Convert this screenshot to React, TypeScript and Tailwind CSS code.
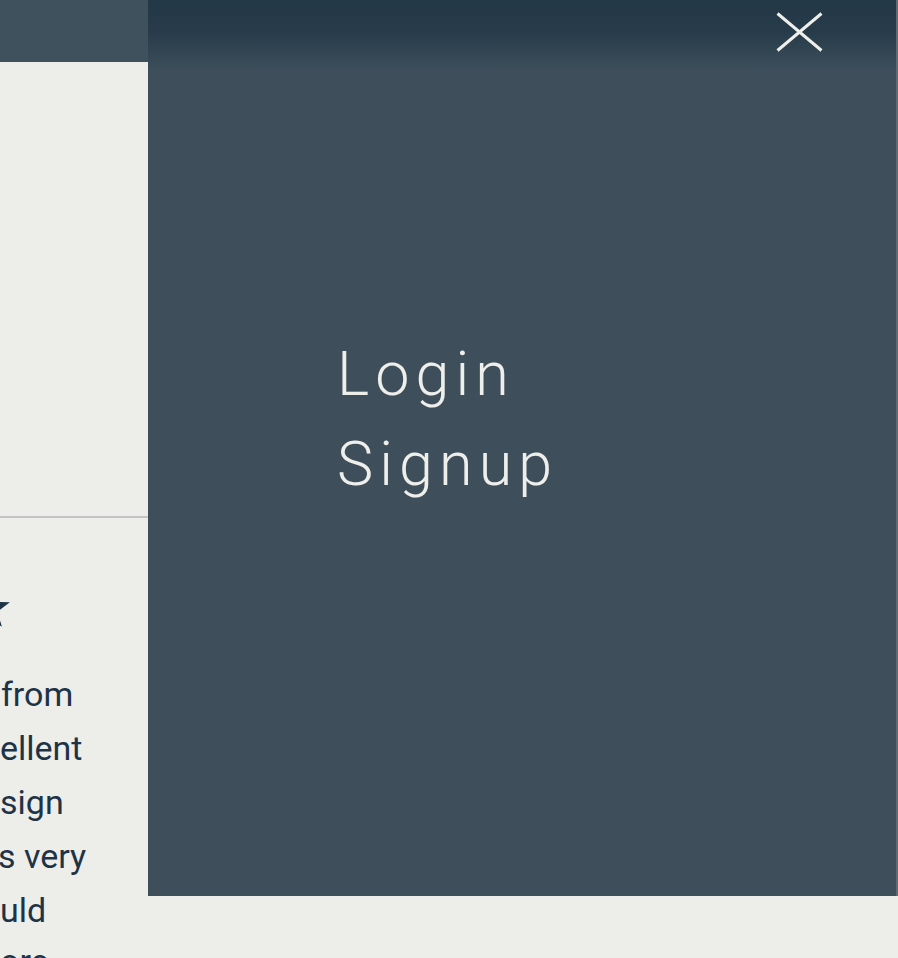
export default function App() {
    const lines = [
        { text: "from", pad: "pl-[1px]" },
        { text: "ellent", pad: "pl-0" },
        { text: "sign", pad: "pl-0" },
        { text: "s very", pad: "-ml-[2px]" },
        { text: "uld", pad: "pl-0" },
        { text: "ore", pad: "-mt-[3px]" },
    ];

    return (
        <div className="relative w-[898px] h-[958px] overflow-hidden bg-[#ededea] font-['Roboto','Liberation_Sans',sans-serif]">
            {/* page underneath */}
            <header className="h-[62px] bg-[#3f515d]" />
            <div className="h-[454px]" />
            <div className="h-[2px] w-full bg-[#c2c5c3]" />
            <div className="pt-[69px] -ml-[33px]">
                <svg width="44" height="44" viewBox="-22 -22 44 44">
                    <polygon
                        fill="#1e3345"
                        points="0,-22 5.2,-7.1 20.9,-6.8 8.4,2.7 12.9,17.8 0,8.8 -12.9,17.8 -8.4,2.7 -20.9,-6.8 -5.2,-7.1"
                    />
                </svg>
            </div>
            <div className="mt-[36px] text-[34px] leading-[54px] text-[#1e3345] whitespace-nowrap">
                {lines.map((l) => (
                    <div key={l.text} className={l.pad}>
                        {l.text}
                    </div>
                ))}
            </div>

            {/* menu overlay */}
            <div className="absolute left-[148px] top-0 w-[750px] h-[896px] flex">
                <div className="relative flex-1 bg-[linear-gradient(to_bottom,#233846_0px,#273b4a_32px,#3e4f5b_72px,#3e4f5b_100%)]">
                    <div className="flex justify-end pt-[12px] pr-[73px]">
                        <button className="w-[47px] h-[40px]">
                            <svg width="47" height="40" viewBox="0 0 47 40">
                                <path d="M1.5 1.5 L45.5 38.5 M45.5 1.5 L1.5 38.5" stroke="#eeeeea" strokeWidth="3" />
                            </svg>
                        </button>
                    </div>
                    <nav className="pl-[189px] pt-[277px] flex flex-col text-[61px] font-light leading-[90px] tracking-[0.1em] text-[#eeeeea]">
                        <a href="#">Login</a>
                        <a href="#">Signup</a>
                    </nav>
                </div>
                <div className="w-[2px] bg-[#5e6b74]" />
            </div>
        </div>
    );
}
